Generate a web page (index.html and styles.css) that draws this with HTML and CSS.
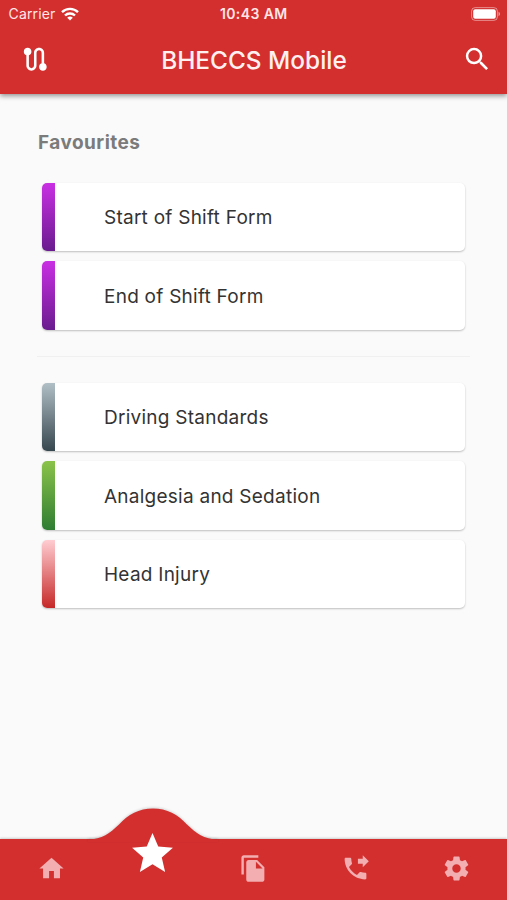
FILE: index.html
```html
<!DOCTYPE html>
<html lang="en">
<head>
<meta charset="utf-8">
<title>BHECCS Mobile</title>
<link rel="stylesheet" href="styles.css">
</head>
<body>
<div class="app">
  <header class="top">
    <div class="status">
      <div class="carrier"><span>Carrier</span>
        <svg class="wifi" viewBox="0 0 18 14" fill="none" stroke="#fff" stroke-width="2.4"><path d="M1 5.2a11.4 11.4 0 0 1 16 0M4 8.5a7.1 7.1 0 0 1 10 0"/><path d="M9 13.6 6.2 10.8a4 4 0 0 1 5.6 0z" fill="#fff" stroke="none"/></svg>
      </div>
      <div class="clock">10:43 AM</div>
      <svg class="battery" viewBox="0 0 30 14"><rect x=".6" y=".6" width="25.8" height="12.8" rx="3.6" fill="none" stroke="#fff" stroke-opacity=".45"/><rect x="2.2" y="2.2" width="22.6" height="9.6" rx="2" fill="#fff"/><path d="M27.5 4.8c2 .7 2 3.7 0 4.4z" fill="#fff" fill-opacity=".5"/></svg>
    </div>
    <div class="bar">
      <svg class="bar-icon" viewBox="0 0 24 24"><path d="M19 15.18V7c0-2.21-1.79-4-4-4s-4 1.79-4 4v10c0 1.1-.9 2-2 2s-2-.9-2-2V8.82C8.16 8.4 9 7.3 9 6c0-1.66-1.34-3-3-3S3 4.34 3 6c0 1.3.84 2.4 2 2.82V17c0 2.21 1.79 4 4 4s4-1.79 4-4V7c0-1.1.9-2 2-2s2 .9 2 2v8.18c-1.16.41-2 1.51-2 2.82 0 1.66 1.34 3 3 3s3-1.34 3-3c0-1.3-.84-2.4-2-2.82z"/></svg>
      <h1>BHECCS Mobile</h1>
      <svg class="bar-icon" viewBox="0 0 24 24"><path d="M15.5 14h-.79l-.28-.27A6.471 6.471 0 0 0 16 9.5 6.5 6.5 0 1 0 9.5 16c1.61 0 3.09-.59 4.23-1.57l.27.28v.79l5 4.99L20.49 19l-4.99-5zm-6 0C7.01 14 5 11.99 5 9.5S7.01 5 9.5 5 14 7.01 14 9.5 11.99 14 9.5 14z"/></svg>
    </div>
  </header>
  <main>
    <h2>Favourites</h2>
    <div class="list">
      <div class="card purple"><span>Start of Shift Form</span></div>
      <div class="card purple"><span>End of Shift Form</span></div>
    </div>
    <hr>
    <div class="list">
      <div class="card slate"><span>Driving Standards</span></div>
      <div class="card green"><span>Analgesia and Sedation</span></div>
      <div class="card red"><span>Head Injury</span></div>
    </div>
  </main>
  <nav>
    <svg class="hump" viewBox="0 0 130 34"><path d="M0 31.5C14 31.5 22 25 31 16.5 40 6.500 51 .5 65 .5S90 6.500 99 16.500C108 25 116 31.500 130 31.500V34H0z"/></svg>
    <div class="tab"><svg viewBox="0 0 24 24"><path d="M10 20v-6h4v6h5v-8h3L12 3 2 12h3v8z"/></svg></div>
    <div class="tab active"><svg viewBox="0 0 24 24"><path d="M12 17.27 18.18 21l-1.64-7.03L22 9.24l-7.19-.61L12 2 9.190 8.630 2 9.240l5.460 4.730L5.820 21z"/></svg></div>
    <div class="tab"><svg viewBox="0 0 24 24"><path d="M16 1H4c-1.1 0-2 .9-2 2v14h2V3h12V1zm-1 4l6 6v10c0 1.1-.9 2-2 2H7.990C6.890 23 6 22.100 6 21l.01-14c0-1.100.890-2 1.990-2h7zm-1 7h5.500L14 6.500V12z"/></svg></div>
    <div class="tab"><svg viewBox="0 0 24 24"><path d="M18 11l5-5-5-5v3h-4v4h4v3zm2 4.500c-1.250 0-2.450-.2-3.570-.57-.35-.11-.74-.03-1.020.24l-2.200 2.200c-2.830-1.440-5.150-3.750-6.590-6.590l2.200-2.210c.28-.26.36-.65.25-1C8.700 6.450 8.500 5.250 8.500 4c0-.55-.45-1-1-1H4c-.55 0-1 .45-1 1 0 9.390 7.610 17 17 17 .55 0 1-.45 1-1v-3.500c0-.55-.45-1-1-1z"/></svg></div>
    <div class="tab"><svg viewBox="0 0 24 24"><path d="M19.430 12.980c.04-.32.07-.64.07-.98s-.03-.66-.07-.98l2.110-1.650c.19-.15.24-.42.12-.64l-2-3.460c-.12-.22-.39-.3-.61-.22l-2.490 1c-.52-.4-1.080-.73-1.690-.98l-.38-2.650C14.460 2.180 14.250 2 14 2h-4c-.25 0-.46.18-.49.42l-.38 2.650c-.61.25-1.170.59-1.690.98l-2.490-1c-.23-.09-.49 0-.61.22l-2 3.460c-.13.22-.07.49.12.64l2.110 1.650c-.04.32-.07.65-.07.98s.03.66.07.98l-2.110 1.650c-.19.15-.24.42-.12.64l2 3.460c.12.22.39.3.61.22l2.490-1c.52.4 1.080.73 1.690.98l.38 2.650c.03.24.24.42.49.42h4c.25 0 .46-.18.49-.42l.38-2.650c.61-.25 1.170-.59 1.690-.98l2.490 1c.23.09.49 0 .61-.22l2-3.460c.12-.22.07-.49-.12-.64l-2.110-1.650zM12 15.500c-1.930 0-3.500-1.570-3.500-3.500s1.570-3.500 3.500-3.500 3.500 1.570 3.500 3.500-1.570 3.500-3.500 3.500z"/></svg></div>
  </nav>
</div>
</body>
</html>
```
FILE: styles.css
```css
* { box-sizing: border-box; }
body { margin: 0; font-family: Inter, "Liberation Sans", sans-serif; }
svg { display: block; }
.app { height: 900px; display: flex; flex-direction: column; background: #fafafa; overflow: hidden; }
.top { height: 94px; background: #d32f2f; color: #fff; box-shadow: 0 2px 5px rgba(0,0,0,.42); }
.status { height: 27px; padding: 0 6px 0 8.5px; display: grid; grid-template-columns: 1fr auto 1fr; align-items: center; font-size: 14px; }
.carrier { display: flex; align-items: center; gap: 6px; color: #ffe6e6; letter-spacing: .15px; }
.wifi { width: 18px; height: 14px; }
.clock { font-weight: 600; font-size: 14px; letter-spacing: .4px; color: #ffe6e6; margin-left: -2px; }
.battery { width: 30px; height: 14px; justify-self: end; }
.bar { height: 65px; padding: 0 14px 0 20px; display: flex; align-items: center; justify-content: space-between; }
.bar-icon { width: 30.5px; height: 30.5px; fill: #fff; }
h1 { margin: 0 5px 0 0; font-size: 24.4px; line-height: 30px; font-weight: 500; color: #fff0f0; white-space: nowrap; }
main { flex: 1; padding: 37px 37px 0; }
h2 { margin: 0; padding-left: 1px; font-size: 19px; line-height: 24px; font-weight: 700; color: #7b7b7b; letter-spacing: .45px; }
.list { padding: 0 5px; display: grid; gap: 10px; }
h2 + .list { margin-top: 28px; }
.card { height: 68.3px; display: flex; align-items: center; background: #fff; border-radius: 5px; overflow: hidden; box-shadow: 0 1px 2px rgba(0,0,0,.24); color: #333; font-size: 19px; letter-spacing: .25px; }
.card::before { content: ""; width: 13px; height: 100%; background: linear-gradient(var(--from), var(--to)); }
.card span { margin-left: 49px; padding-top: 1.4px; }
.purple { --from: #c92fe3; --to: #6a1b8f; }
.slate { --from: #b0bec5; --to: #37474f; }
.green { --from: #8bc34a; --to: #2e7d32; }
.red { --from: #ffcdd2; --to: #c62828; }
hr { margin: 26.5px 0 26px; border: 0; height: 1px; background: #f0f0f0; }
nav { position: relative; height: 61px; display: grid; grid-template-columns: repeat(5, 1fr); background: #d32f2f; box-shadow: 0 -1px 2px rgba(0,0,0,.18); }
.hump { position: absolute; left: 87.5px; top: -31px; width: 130px; height: 34px; fill: #d32f2f; filter: drop-shadow(0 -1px 1px rgba(0,0,0,.14)); }
.tab { position: relative; display: flex; justify-content: center; padding: 14.5px 0 0 1px; }
.tab svg { width: 29px; height: 29px; fill: #f2aeb0; }
.tab.active { padding-top: 0; }
.tab.active svg { width: 49px; height: 49px; margin-top: -10px; fill: #fff; }
```
